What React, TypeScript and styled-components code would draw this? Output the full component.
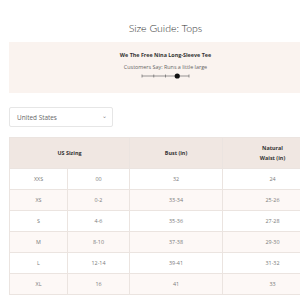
import React from 'react';
import styled, { createGlobalStyle } from 'styled-components';

const COLORS = {
  text: '#333',
  muted: '#7a7a7a',
  blush: '#faf3ef',
  header: '#f0e7e2',
  stripe: '#fdf8f6',
  line: '#ebe4e0',
};

const GlobalStyle = createGlobalStyle`
  html, body {
    margin: 0;
    padding: 0;
    background: #fff;
  }
  body {
    font-family: 'Open Sans', 'Liberation Sans', sans-serif;
  }
`;

const ROWS = [
  ['XXS', '00', '32', '24'],
  ['XS', '0-2', '33-34', '25-26'],
  ['S', '4-6', '35-36', '27-28'],
  ['M', '8-10', '37-38', '29-30'],
  ['L', '12-14', '39-41', '31-32'],
  ['XL', '16', '41', '33'],
];

const FitScale = () => (
  <svg width="50" height="8" viewBox="0 0 50 8">
    <line x1="1" y1="4" x2="48" y2="4" stroke="#555" strokeWidth="0.6" />
    {[1, 12.75, 24.5, 48].map((x) => (
      <line key={x} x1={x} y1="2.5" x2={x} y2="5.5" stroke="#555" strokeWidth="0.6" />
    ))}
    <circle cx="36.25" cy="4" r="2.6" fill="#111" />
  </svg>
);

const App = () => {
  return (
    <Viewport>
      <GlobalStyle />
      <Page>
        <Title>Size Guide: Tops</Title>
        <Review>
          <ProductName>We The Free Nina Long-Sleeve Tee</ProductName>
          <Verdict>Customers Say: Runs a little large</Verdict>
          <FitScale />
        </Review>
        <Select>
          <span>United States</span>
          <Chevron>⌄</Chevron>
        </Select>
        <Table>
          <colgroup>
            <col style={{ width: 58 }} />
            <col style={{ width: 62 }} />
            <col style={{ width: 93 }} />
            <col style={{ width: 100 }} />
          </colgroup>
          <thead>
            <tr>
              <Th colSpan={2}>US Sizing</Th>
              <Th>Bust (in)</Th>
              <Th>
                Natural
                <br />
                Waist (in)
              </Th>
            </tr>
          </thead>
          <tbody>
            {ROWS.map((row, i) => (
              <Row key={row[0]} $striped={i % 2 === 1}>
                {row.map((cell, j) => (
                  <Td key={j}>{cell}</Td>
                ))}
              </Row>
            ))}
          </tbody>
        </Table>
      </Page>
    </Viewport>
  );
};

const Viewport = styled.div`
  width: 100%;
  height: 300px;
  overflow: hidden;
`;

const Page = styled.div`
  width: 313px;
  padding: 0 0 0 9px;
  display: flex;
  flex-direction: column;
`;

const Title = styled.h1`
  margin: 20px 0 0;
  height: 22px;
  font-family: Lato, 'Open Sans', sans-serif;
  font-weight: 300;
  font-size: 10.5px;
  line-height: 16px;
  color: #333;
  text-align: center;
`;

const Review = styled.div`
  height: 51px;
  box-sizing: border-box;
  padding-top: 10px;
  background: ${COLORS.blush};
  display: flex;
  flex-direction: column;
  align-items: center;
`;

const ProductName = styled.div`
  font-size: 5.4px;
  line-height: 7px;
  font-weight: 700;
  color: ${COLORS.text};
`;

const Verdict = styled.div`
  margin-top: 5px;
  margin-bottom: 0.5px;
  font-size: 5.4px;
  line-height: 7px;
  color: #666;
`;

const Select = styled.div`
  margin-top: 14px;
  width: 104px;
  height: 20px;
  box-sizing: border-box;
  border: 1px solid #e6e6e6;
  border-radius: 2px;
  padding: 0 5px 0 7px;
  display: flex;
  align-items: center;
  justify-content: space-between;
  font-size: 6.4px;
  color: #666;
`;

const Chevron = styled.span`
  font-size: 6px;
  line-height: 6px;
  margin-top: -3px;
  color: #888;
`;

const Table = styled.table`
  margin-top: 10px;
  width: 313px;
  border-collapse: collapse;
  table-layout: fixed;
  font-size: 5.4px;
  color: ${COLORS.muted};
`;

const Th = styled.th`
  height: 30px;
  padding: 0;
  background: ${COLORS.header};
  border: 1px solid ${COLORS.line};
  color: ${COLORS.text};
  font-weight: 700;
  line-height: 10px;
  text-align: center;
`;

const Row = styled.tr<{ $striped: boolean }>`
  background: ${(p) => (p.$striped ? COLORS.stripe : '#fff')};
`;

const Td = styled.td`
  height: 20px;
  padding: 0;
  border: 1px solid ${COLORS.line};
  text-align: center;
`;

export default App;
